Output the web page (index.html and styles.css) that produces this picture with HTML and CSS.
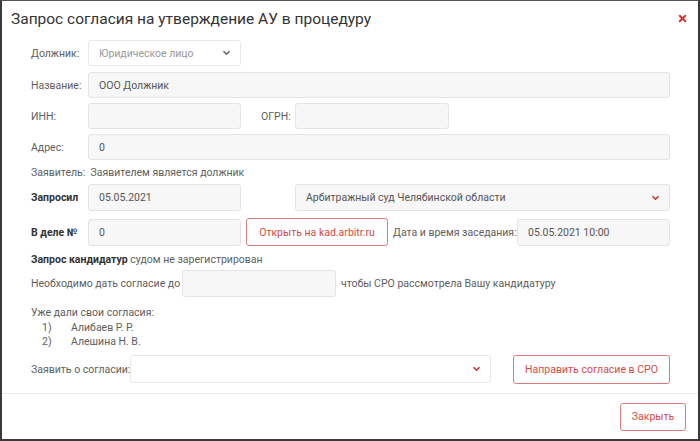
FILE: index.html
```html
<!DOCTYPE html>
<html lang="ru">
<head>
<meta charset="utf-8">
<title>Запрос согласия</title>
<link rel="stylesheet" href="styles.css">
</head>
<body>
<div class="modal">
  <div class="modal-header">
    <h1 class="title">Запрос согласия на утверждение АУ в процедуру</h1>
    <svg class="close" width="9" height="9" viewBox="0 0 9 9"><path d="M1.2 1.2 L7.8 7.8 M7.8 1.2 L1.2 7.8" stroke="#d9302c" stroke-width="2" fill="none"/></svg>
  </div>
  <div class="modal-body">
    <div class="row r1">
      <span class="label">Должник:</span>
      <div class="field select white w153">
        <span class="ph">Юридическое лицо</span>
        <svg class="chev" width="9" height="6" viewBox="0 0 9 6"><polyline points="1.5,1.2 4.5,4.2 7.5,1.2" fill="none" stroke="#666" stroke-width="1.6"/></svg>
      </div>
    </div>
    <div class="row r2">
      <span class="label">Название:</span>
      <div class="field grow">ООО Должник</div>
    </div>
    <div class="row r3">
      <span class="label">ИНН:</span>
      <div class="field w153"></div>
      <span class="label-inline ogrn">ОГРН:</span>
      <div class="field w154"></div>
    </div>
    <div class="row r4">
      <span class="label">Адрес:</span>
      <div class="field grow">0</div>
    </div>
    <div class="text-row r5">Заявитель:&nbsp; Заявителем является должник</div>
    <div class="row r6">
      <span class="label bold">Запросил</span>
      <div class="field w153 h27">05.05.2021</div>
      <div class="field select grow court h27">
        <span>Арбитражный суд Челябинской области</span>
        <svg class="chev" width="9" height="6" viewBox="0 0 9 6"><polyline points="1.5,1.2 4.5,4.2 7.5,1.2" fill="none" stroke="#c9302c" stroke-width="1.6"/></svg>
      </div>
    </div>
    <div class="row r7">
      <span class="label bold">В деле №</span>
      <div class="field w153 h27">0</div>
      <button class="btn kad">Открыть на kad.arbitr.ru</button>
      <span class="label-inline date-label">Дата и время заседания:</span>
      <div class="field grow h27">05.05.2021 10:00</div>
    </div>
    <div class="text-row r8"><b>Запрос кандидатур</b> судом не зарегистрирован</div>
    <div class="row r9">
      <span class="label-inline deadline-label">Необходимо дать согласие до</span>
      <div class="field w154 h27 deadline"></div>
      <span class="label-inline">чтобы СРО рассмотрела Вашу кандидатуру</span>
    </div>
    <div class="given">
      <div class="given-title">Уже дали свои согласия:</div>
      <ol class="given-list">
        <li><span class="num">1)</span><span>Алибаев Р. Р.</span></li>
        <li><span class="num">2)</span><span>Алешина Н. В.</span></li>
      </ol>
    </div>
    <div class="row r10">
      <span class="label-inline agree-label">Заявить о согласии:</span>
      <div class="field select white agree h28">
        <span></span>
        <svg class="chev" width="9" height="6" viewBox="0 0 9 6"><polyline points="1.5,1.2 4.5,4.2 7.5,1.2" fill="none" stroke="#c9302c" stroke-width="1.6"/></svg>
      </div>
      <button class="btn send">Направить согласие в СРО</button>
    </div>
  </div>
  <div class="modal-footer">
    <button class="btn closebtn">Закрыть</button>
  </div>
</div>
</body>
</html>
```

FILE: styles.css
```css
* { box-sizing: border-box; }
html, body { margin: 0; padding: 0; background: #fff; }
body {
  font-family: Roboto, "Open Sans", sans-serif;
  font-size: 10.5px;
  color: #5e5e5e;
}
.modal {
  width: 700px;
  height: 441px;
  border-top: 1px solid #555;
  border-left: 2px solid #3a3a3a;
  border-right: 2px solid #3a3a3a;
  border-bottom: 2px solid #3a3a3a;
  display: flex;
  flex-direction: column;
}
.modal-header {
  display: flex;
  justify-content: space-between;
  align-items: center;
  height: 34px;
  padding: 2px 11px 0 9px;
}
.title {
  margin: 0;
  font-size: 15.5px;
  font-weight: 400;
  color: #333;
}
.close { flex: none; margin-top: -2px; }
.modal-body {
  padding: 5px 28px 0 29px;
  flex: 1;
}
.row {
  display: flex;
  align-items: center;
}
.label {
  width: 57px;
  flex: none;
  white-space: nowrap;
}
.bold { font-weight: 700; color: #333; }
.label-inline { white-space: nowrap; flex: none; }
.field {
  height: 26px;
  border: 1px solid #e4e4e4;
  border-radius: 3px;
  background: #f7f7f7;
  padding: 0 10px;
  display: flex;
  align-items: center;
  color: #555;
  flex: none;
}
.h27 { height: 27px; }
.h28 { height: 28px; }
.grow { flex: 1; }
.w153 { width: 153px; }
.w154 { width: 154px; }
.white { background: #fff; border-color: #e8e8e8; }
.select { justify-content: space-between; padding-right: 9px; }
.ph { color: #999; }
.chev { flex: none; }
.court { margin-left: 54px; }
.ogrn { margin-left: 20px; width: 34px; }
.r2 { margin-top: 6px; }
.r3 { margin-top: 5px; }
.r4 { margin-top: 5px; }
.text-row { white-space: nowrap; }
.r5 { margin-top: 5px; height: 16px; line-height: 16px; }
.r6 { margin-top: 3px; }
.r7 { margin-top: 7px; }
.btn {
  font-family: inherit;
  font-size: 10.5px;
  color: #d44a47;
  background: #fff;
  border: 1px solid #dc7d7b;
  border-radius: 3px;
  padding: 0;
  flex: none;
}
.kad { width: 142px; height: 28px; margin-left: 5px; }
.date-label { margin-left: 5px; width: 124px; }
.text-row b { color: #333; }
.r8 { margin-top: 6px; height: 16px; line-height: 16px; }
.r9 { margin-top: 2px; }
.deadline-label { width: 151px; }
.deadline { margin-right: 5px; }
.given { margin-top: 9px; line-height: 14.5px; }
.given-list { margin: 0; padding: 0; list-style: none; }
.given-list li { display: flex; }
.num { width: 40px; padding-left: 11px; flex: none; }
.r10 { margin-top: 5px; }
.agree-label { width: 99px; }
.agree { width: 361px; }
.send { width: 157px; height: 29px; margin-left: 22px; }
.modal-footer {
  border-top: 1px solid #e9e9e9;
  height: 46px;
  display: flex;
  justify-content: flex-end;
  align-items: center;
  padding-right: 12px;
}
.closebtn { width: 66px; height: 28px; }
```
